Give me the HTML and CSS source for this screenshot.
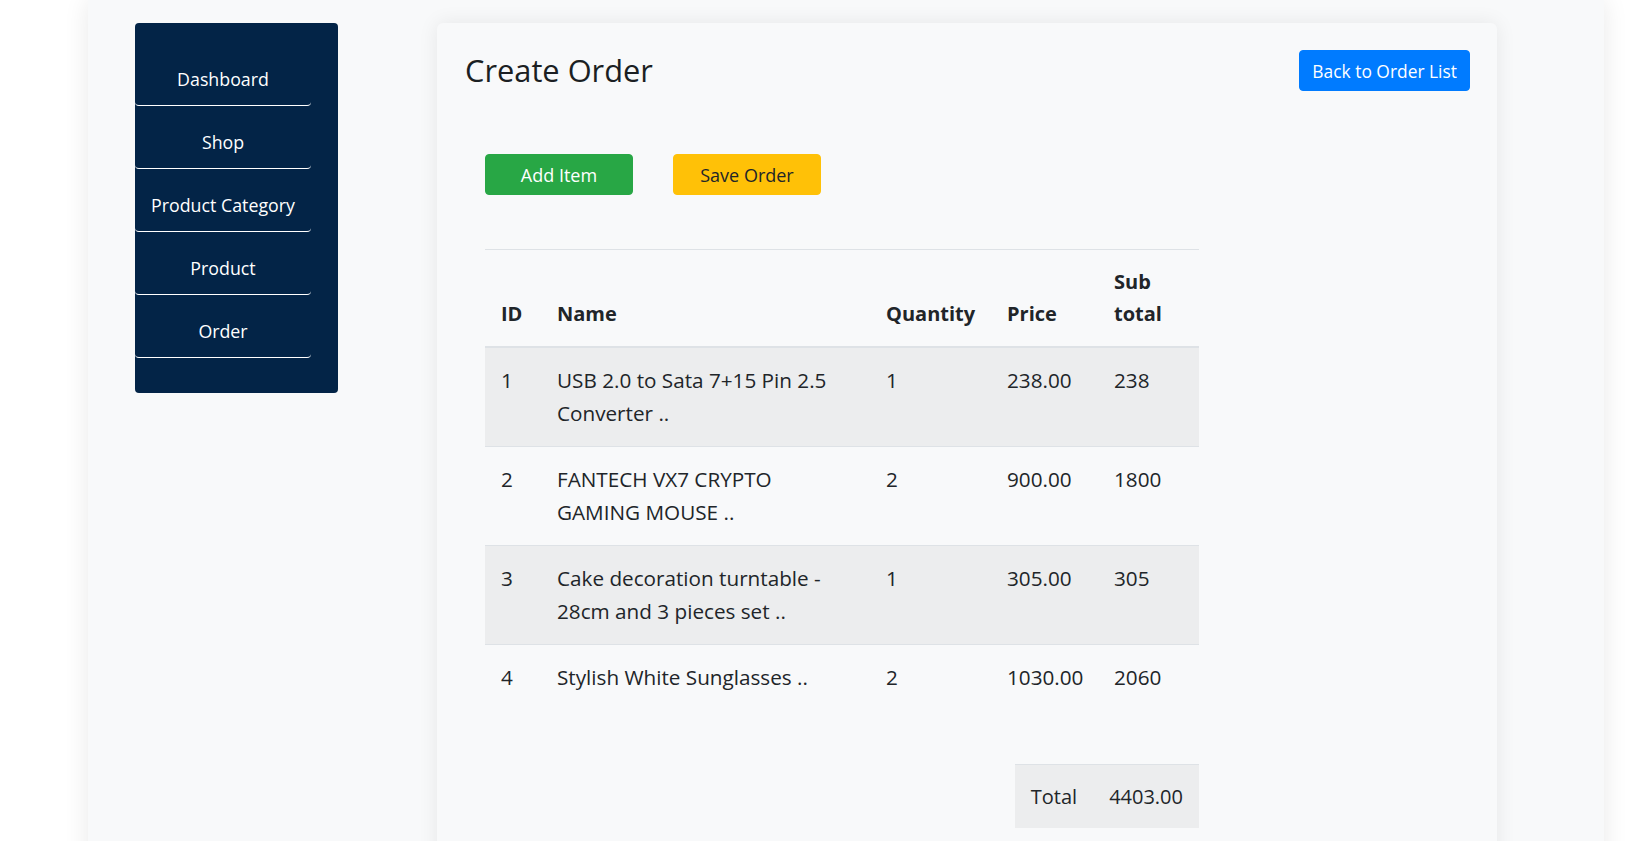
FILE: index.html
```html
<!DOCTYPE html>
<html lang="en">
<head>
<meta charset="utf-8">
<title>Create Order</title>
<link rel="stylesheet" href="styles.css">
</head>
<body>
<div class="wrapper">
  <aside class="sidebar">
    <ul class="nav">
      <li><a class="nav-link" href="#">Dashboard</a></li>
      <li><a class="nav-link" href="#">Shop</a></li>
      <li><a class="nav-link" href="#">Product Category</a></li>
      <li><a class="nav-link" href="#">Product</a></li>
      <li><a class="nav-link" href="#">Order</a></li>
    </ul>
  </aside>
  <main class="card">
    <div class="card-header">
      <h2 class="title">Create Order</h2>
      <a class="btn btn-primary" href="#">Back to Order List</a>
    </div>
    <div class="content">
      <div class="actions">
        <button class="btn btn-fixed btn-success" type="button">Add Item</button>
        <button class="btn btn-fixed btn-warning" type="button">Save Order</button>
      </div>
      <table class="table">
        <thead>
          <tr>
            <th class="col-id">ID</th>
            <th class="col-name">Name</th>
            <th class="col-qty">Quantity</th>
            <th class="col-price">Price</th>
            <th class="col-sub">Sub total</th>
          </tr>
        </thead>
        <tbody>
          <tr>
            <td>1</td>
            <td>USB 2.0 to Sata 7+15 Pin 2.5 Converter ..</td>
            <td>1</td>
            <td>238.00</td>
            <td>238</td>
          </tr>
          <tr>
            <td>2</td>
            <td>FANTECH VX7 CRYPTO GAMING MOUSE ..</td>
            <td>2</td>
            <td>900.00</td>
            <td>1800</td>
          </tr>
          <tr>
            <td>3</td>
            <td>Cake decoration turntable - 28cm and 3 pieces set ..</td>
            <td>1</td>
            <td>305.00</td>
            <td>305</td>
          </tr>
          <tr>
            <td>4</td>
            <td>Stylish White Sunglasses ..</td>
            <td>2</td>
            <td>1030.00</td>
            <td>2060</td>
          </tr>
        </tbody>
      </table>
      <div class="total-wrap">
        <table class="total-table">
          <tr>
            <td class="total-label">Total</td>
            <td class="total-value">4403.00</td>
          </tr>
        </table>
      </div>
    </div>
  </main>
</div>
</body>
</html>
```

FILE: styles.css
```css
html, body {
  margin: 0;
  padding: 0;
  background: #ffffff;
}

body {
  font-family: "Open Sans", "Noto Sans", "Liberation Sans", sans-serif;
  color: #212529;
  overflow: hidden;
}

.wrapper {
  margin-left: 88px;
  width: 1516px;
  min-height: 100vh;
  box-sizing: border-box;
  padding: 23px 0 0 47px;
  background: #f8f9fa;
  box-shadow: 0 0 24px rgba(0, 0, 0, 0.09);
  display: flex;
  align-items: flex-start;
  gap: 99px;
}

/* Sidebar */
.sidebar {
  width: 203px;
  flex: none;
  box-sizing: border-box;
  padding: 20px 0 35px;
  background: #032447;
  border-radius: 4px;
}

.nav {
  list-style: none;
  margin: 0;
  padding: 0;
  width: 176px;
}

.nav-link {
  display: block;
  color: #ffffff;
  text-decoration: none;
  text-align: center;
  font-size: 17.8px;
  line-height: 28px;
  padding: 22px 0 12px;
  border-bottom: 1px solid #ffffff;
  border-radius: 0 0 4px 4px;
}

/* Card */
.card {
  width: 1060px;
  flex: none;
  box-sizing: border-box;
  min-height: 900px;
  padding: 27px 27px 40px 27px;
  background: #f8f9fa;
  border-radius: 6px;
  box-shadow: 0 0 20px rgba(0, 0, 0, 0.08);
}

.card-header {
  display: flex;
  justify-content: space-between;
  align-items: center;
}

.title {
  margin: 0;
  font-size: 30.8px;
  font-weight: 400;
  line-height: 1.2;
  padding-left: 1px;
  color: #1b1f23;
}

.btn {
  display: inline-flex;
  align-items: center;
  justify-content: center;
  box-sizing: border-box;
  height: 41px;
  padding: 0 12px;
  font-family: inherit;
  font-size: 17.4px;
  border: 1px solid transparent;
  border-radius: 4px;
  text-decoration: none;
  cursor: pointer;
}

.btn-primary {
  background: #007bff;
  border-color: #007bff;
  color: #ffffff;
}

.btn-success {
  background: #28a745;
  border-color: #28a745;
  color: #ffffff;
}

.btn-warning {
  background: #ffc107;
  border-color: #ffc107;
  color: #212529;
}

.btn-fixed {
  width: 148px;
  font-size: 18px;
}

.content {
  padding-left: 21px;
  width: 714px;
}

.actions {
  margin-top: 63px;
  display: flex;
  gap: 40px;
}

/* Table */
.table {
  margin-top: 54px;
  width: 714px;
  table-layout: fixed;
  border-collapse: collapse;
  font-size: 20.7px;
  line-height: 33px;
}

.table th,
.table td {
  box-sizing: border-box;
  padding: 16px;
  text-align: left;
  vertical-align: top;
  border-top: 1px solid #dee2e6;
}

.table thead th {
  vertical-align: bottom;
  font-size: 20px;
  line-height: 32px;
  font-weight: 700;
  border-bottom: 2px solid #dee2e6;
}

.table tbody tr:nth-child(odd) {
  background: #ecedee;
}

.col-id { width: 56px; }
.col-name { width: 329px; }
.col-qty { width: 121px; }
.col-price { width: 107px; }
.col-sub { width: 101px; }

.total-wrap {
  display: flex;
  justify-content: flex-end;
  margin-top: 54px;
}

.total-table {
  border-collapse: collapse;
  font-size: 20px;
  line-height: 33px;
  background: #ecedee;
}

.total-table td {
  padding: 15px 16px;
  border-top: 1px solid #dee2e6;
}
```
